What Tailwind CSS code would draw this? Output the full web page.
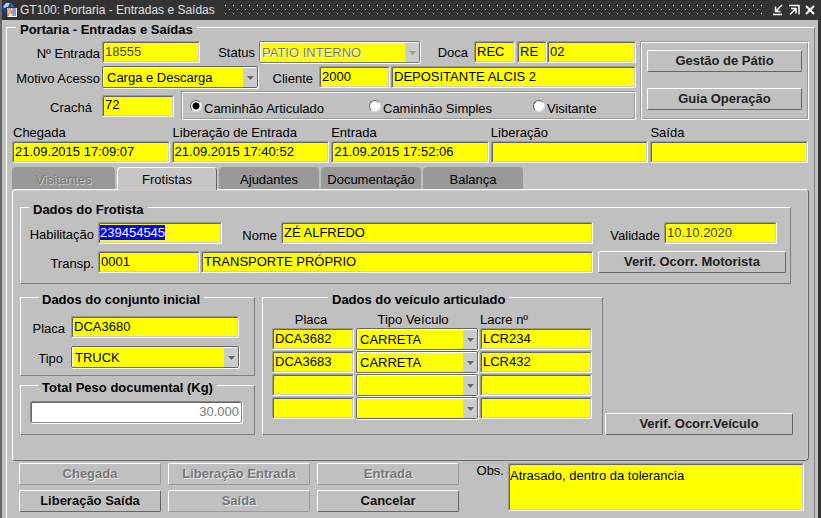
<!DOCTYPE html>
<html lang="pt-BR">
<head>
    <title>GT100: Portaria - Entradas e Saídas</title>
    <meta charset="UTF-8">
    <meta name="viewport" content="width=device-width, initial-scale=1.0">
    <script src="https://cdn.jsdelivr.net/npm/@tailwindcss/browser@4"></script>
</head>
<body class="bg-[#c0c0c0] text-black text-[13px] leading-4 font-['Liberation_Sans',Arial,sans-serif]">
    <div class="flex flex-col h-screen overflow-hidden border-l-2 border-l-[#666] border-r-3 border-r-[#333]">
        <!-- title bar -->
        <header class="flex items-center h-5 shrink-0 bg-[#333] text-[#e0e0e0]">
            <svg class="size-4 mr-0.5" viewBox="0 0 16 16">
                <circle cx="6" cy="6" r="6" fill="#1a3f9c"/>
                <path d="M1 5l3-4 4 0-2 4-3 1z" fill="#a8dcd8"/>
                <path d="M9 1l3 4-3 1z" fill="#3f8e8c"/>
                <rect x="4.500" y="5.500" width="11" height="10" fill="#fff" stroke="#1c2a90" stroke-width="1"/>
                <path d="M10 7h4M10 9h4M9 11h5M10 13h4M5 13h2" stroke="#2536b8" stroke-width="1"/>
                <path d="M6 6h3l-1 3h2l-5 6 1-4H5z" fill="#f7d51d" stroke="#b33" stroke-width=".5"/>
            </svg>
            <h1 class="whitespace-nowrap text-[12px]">GT100: Portaria - Entradas e Saídas</h1>
            <svg class="flex-1 h-3 ml-2.5 mr-2">
                <defs>
                    <pattern id="grip" width="8" height="8" patternUnits="userSpaceOnUse">
                        <path d="M1 2h1v1h-1zM5 6h1v1h-1z" fill="#000"/>
                        <path d="M0 1h1v1h-1zM4 5h1v1h-1z" fill="#ccc"/>
                    </pattern>
                </defs>
                <rect width="100%" height="12" fill="url(#grip)"/>
            </svg>
            <div class="flex gap-1 pr-0.5">
                <button type="button" aria-label="Minimizar">
                    <svg class="size-3" viewBox="0 0 12 12" fill="none" stroke="#fff" stroke-width="1.500"><path d="M10 1L4 7M3.500 2.500v5h5M1 10.500h9"/></svg>
                </button>
                <button type="button" aria-label="Maximizar">
                    <svg class="size-3" viewBox="0 0 12 12" fill="none" stroke="#fff" stroke-width="1.500"><path d="M2 10.500L7 5.500M3 4.500h5v5M1 1.500h10v9" /></svg>
                </button>
                <button type="button" aria-label="Fechar">
                    <svg class="size-3" viewBox="0 0 12 12" fill="none" stroke="#fff" stroke-width="2"><path d="M2 2l8 8M10 2l-8 8"/></svg>
                </button>
            </div>
        </header>

        <fieldset class="flex-1 min-w-0 -mt-1 ml-1 mr-[3px] px-[5px] pt-[3px] border border-t-white border-l-white border-r-[#808080] border-b-0">
            <legend class="ml-1 pt-1.5 px-1 font-bold">Portaria - Entradas e Saídas</legend>

            <div class="flex gap-1">
                <div class="flex-1 min-w-0 flex flex-col gap-[3px]">
                    <div class="flex items-center">
                        <label for="entrada-num" class="w-[90px] pr-0.5 pt-1 text-right">Nº Entrada</label>
                        <input id="entrada-num" value="18555" class="w-[98px] h-[22px] px-0.5 pb-0.5 bg-[#ff0] text-[#444] border border-t-[#999] border-l-[#999] border-r-white border-b-white rounded-xs shadow-[inset_1px_1px_#666,inset_-1px_-1px_#ccc] outline-none">
                        <label for="status" class="w-[59px] pr-1 pt-0.5 text-right">Status</label>
                        <div class="relative flex-1">
                            <select id="status" disabled class="block appearance-none w-full h-[22px] pl-0.5 pt-px bg-[#ff0] text-[#777] text-shadow-[1px_1px_0_#fff] border border-[#777] rounded-xs shadow-[inset_1px_1px_#fff,1px_1px_#fff] opacity-100"><option>PATIO INTERNO</option></select>
                            <span class="pointer-events-none absolute right-px top-0.5 bottom-px w-3.5 flex items-center justify-center bg-[#ccc]"><svg class="w-[7px] h-1" viewBox="0 0 7 4"><path d="M0 0h7L3.500 4z" fill="#999"/></svg></span>
                        </div>
                        <label for="doca" class="w-[54px] pr-1.5 pt-0.5 text-right">Doca</label>
                        <input id="doca" value="REC" class="w-[41px] h-[22px] mr-0.5 px-0.5 pb-0.5 bg-[#ff0] border border-t-[#999] border-l-[#999] border-r-white border-b-white rounded-xs shadow-[inset_1px_1px_#666,inset_-1px_-1px_#ccc] outline-none">
                        <input aria-label="Doca setor" value="RE" class="w-[30px] h-[22px] px-0.5 pb-0.5 bg-[#ff0] border border-t-[#999] border-l-[#999] border-r-white border-b-white rounded-xs shadow-[inset_1px_1px_#666,inset_-1px_-1px_#ccc] outline-none">
                        <input aria-label="Doca número" value="02" class="w-[89px] h-[22px] px-0.5 pb-0.5 bg-[#ff0] border border-t-[#999] border-l-[#999] border-r-white border-b-white rounded-xs shadow-[inset_1px_1px_#666,inset_-1px_-1px_#ccc] outline-none">
                    </div>
                    <div class="flex items-center">
                        <label for="motivo" class="w-[90px] pr-0.5 pt-1 text-right">Motivo Acesso</label>
                        <div class="relative w-[156px]">
                            <select id="motivo" class="block appearance-none w-full h-[22px] pl-1 pt-px bg-[#ff0] border border-[#666] rounded-xs shadow-[inset_1px_1px_#fff,1px_1px_#fff]"><option>Carga e Descarga</option></select>
                            <span class="pointer-events-none absolute right-px top-0.5 bottom-px w-3.5 flex items-center justify-center bg-[#ccc]"><svg class="w-[7px] h-1" viewBox="0 0 7 4"><path d="M0 0h7L3.500 4z" fill="#666"/></svg></span>
                        </div>
                        <label for="cliente" class="w-[61px] pr-1.5 pt-1 text-right">Cliente</label>
                        <input id="cliente" value="2000" class="w-[71px] h-[22px] mr-px px-0.5 pb-0.5 bg-[#ff0] border border-t-[#999] border-l-[#999] border-r-white border-b-white rounded-xs shadow-[inset_1px_1px_#666,inset_-1px_-1px_#ccc] outline-none">
                        <input aria-label="Nome do cliente" value="DEPOSITANTE ALCIS 2" class="flex-1 min-w-0 h-[22px] px-0.5 pb-0.5 bg-[#ff0] border border-t-[#999] border-l-[#999] border-r-white border-b-white rounded-xs shadow-[inset_1px_1px_#666,inset_-1px_-1px_#ccc] outline-none">
                    </div>
                    <div class="flex items-center">
                        <label for="cracha" class="w-[90px] pr-2.5 pt-1 text-right">Crachá</label>
                        <input id="cracha" value="72" class="w-[72px] h-[22px] mr-[7px] px-0.5 pb-0.5 bg-[#ff0] border border-t-[#999] border-l-[#999] border-r-white border-b-white rounded-xs shadow-[inset_1px_1px_#666,inset_-1px_-1px_#ccc] outline-none">
                        <div role="radiogroup" aria-label="Tipo de acesso" class="flex-1 flex items-center h-[29px] pl-2 border border-t-[#999] border-l-[#999] border-r-white border-b-white shadow-[inset_1px_1px_#fff,inset_-1px_-1px_#999]">
                            <label class="flex items-center gap-0.5 w-[179px]">
                                <input type="radio" name="tipo-acesso" checked class="appearance-none size-3 rounded-full bg-white border border-t-[#666] border-l-[#666] border-r-[#ddd] border-b-[#ddd] checked:bg-[radial-gradient(#000_45%,#fff_55%)]">
                                <span class="pt-1.5">Caminhão Articulado</span>
                            </label>
                            <label class="flex items-center gap-0.5 w-[164px]">
                                <input type="radio" name="tipo-acesso" class="appearance-none size-3 rounded-full bg-white border border-t-[#666] border-l-[#666] border-r-[#ddd] border-b-[#ddd] checked:bg-[radial-gradient(#000_45%,#fff_55%)]">
                                <span class="pt-1.5">Caminhão Simples</span>
                            </label>
                            <label class="flex items-center gap-0.5">
                                <input type="radio" name="tipo-acesso" class="appearance-none size-3 rounded-full bg-white border border-t-[#666] border-l-[#666] border-r-[#ddd] border-b-[#ddd] checked:bg-[radial-gradient(#000_45%,#fff_55%)]">
                                <span class="pt-1.5">Visitante</span>
                            </label>
                        </div>
                    </div>
                </div>
                <div class="w-[169px] flex flex-col gap-4 px-1.5 pt-2 border border-t-[#999] border-l-[#999] border-r-white border-b-white shadow-[inset_1px_1px_#fff,inset_-1px_-1px_#999]">
                    <button type="button" class="h-[22px] font-bold text-[#222] border border-t-white border-l-white border-r-[#666] border-b-[#666] rounded-xs">Gestão de Pátio</button>
                    <button type="button" class="h-[22px] font-bold text-[#222] border border-t-white border-l-white border-r-[#666] border-b-[#666] rounded-xs">Guia Operação</button>
                </div>
            </div>

            <!-- timestamps -->
            <div class="grid grid-cols-5 gap-0.5 mt-[5px] mr-px">
                <div>
                    <label for="t-chegada" class="block pl-px">Chegada</label>
                    <input id="t-chegada" value="21.09.2015 17:09:07" class="block w-full h-[22px] px-0.5 pb-0.5 bg-[#ff0] border border-t-[#999] border-l-[#999] border-r-white border-b-white rounded-xs shadow-[inset_1px_1px_#666,inset_-1px_-1px_#ccc] outline-none">
                </div>
                <div>
                    <label for="t-lib-entrada" class="block pl-px">Liberação de Entrada</label>
                    <input id="t-lib-entrada" value="21.09.2015 17:40:52" class="block w-full h-[22px] px-0.5 pb-0.5 bg-[#ff0] border border-t-[#999] border-l-[#999] border-r-white border-b-white rounded-xs shadow-[inset_1px_1px_#666,inset_-1px_-1px_#ccc] outline-none">
                </div>
                <div>
                    <label for="t-entrada" class="block">Entrada</label>
                    <input id="t-entrada" value="21.09.2015 17:52:06" class="block w-full h-[22px] px-0.5 pb-0.5 bg-[#ff0] border border-t-[#999] border-l-[#999] border-r-white border-b-white rounded-xs shadow-[inset_1px_1px_#666,inset_-1px_-1px_#ccc] outline-none">
                </div>
                <div>
                    <label for="t-liberacao" class="block">Liberação</label>
                    <input id="t-liberacao" class="block w-full h-[22px] px-0.5 pb-0.5 bg-[#ff0] border border-t-[#999] border-l-[#999] border-r-white border-b-white rounded-xs shadow-[inset_1px_1px_#666,inset_-1px_-1px_#ccc] outline-none">
                </div>
                <div>
                    <label for="t-saida" class="block">Saída</label>
                    <input id="t-saida" class="block w-full h-[22px] px-0.5 pb-0.5 bg-[#ff0] border border-t-[#999] border-l-[#999] border-r-white border-b-white rounded-xs shadow-[inset_1px_1px_#666,inset_-1px_-1px_#ccc] outline-none">
                </div>
            </div>

            <!-- tabs -->
            <div role="tablist" class="flex gap-0.5 mt-1">
                <button type="button" role="tab" disabled class="w-[103px] h-[22px] pt-1 rounded-t-sm bg-[#999] text-[#777] text-shadow-[1px_1px_0_#ccc]">Visitantes</button>
                <button type="button" role="tab" aria-selected="true" class="w-[100px] h-[23px] -mb-px pt-0.5 rounded-t-sm bg-[#c6c6c6] border border-b-0 border-t-white border-l-white border-r-[#666]">Frotistas</button>
                <button type="button" role="tab" class="w-[100px] h-[22px] pt-1 rounded-t-sm bg-[#999]">Ajudantes</button>
                <button type="button" role="tab" class="w-[100px] h-[22px] pt-1 rounded-t-sm bg-[#999]">Documentação</button>
                <button type="button" role="tab" class="w-[100px] h-[22px] pt-1 rounded-t-sm bg-[#999]">Balança</button>
            </div>
            <div role="tabpanel" class="pt-1.5 pl-[7px] pb-[25px] border border-t-white border-l-white border-r-[#666] border-b-[#666] rounded-sm shadow-[inset_1px_1px_#ccc,inset_-1px_-1px_#ccc]">
                <fieldset class="min-w-0 mr-[17px] pt-1 pb-2.5 pr-1 flex flex-col gap-[7px] border border-t-white border-l-white border-r-[#808080] border-b-[#808080]">
                    <legend class="ml-2 pt-1.5 px-1 font-bold">Dados do Frotista</legend>
                    <div class="flex items-center pr-[9px]">
                        <label for="habilitacao" class="w-[77px] pr-1 pt-1 text-right">Habilitação</label>
                        <input id="habilitacao" value="239454545" class="w-[124px] h-[22px] px-px pb-0.5 leading-[18px] bg-[#ff0] selection:bg-[#00f] selection:text-white border border-t-[#999] border-l-[#999] border-r-white border-b-white rounded-xs shadow-[inset_1px_1px_#666,inset_-1px_-1px_#ccc] outline-none">
                        <label for="nome" class="w-[59px] pr-1 pt-1.5 text-right">Nome</label>
                        <input id="nome" value="ZÉ ALFREDO" class="flex-1 min-w-0 h-[22px] px-0.5 pb-0.5 bg-[#ff0] border border-t-[#999] border-l-[#999] border-r-white border-b-white rounded-xs shadow-[inset_1px_1px_#666,inset_-1px_-1px_#ccc] outline-none">
                        <label for="validade" class="w-[71px] pr-1 pt-1.5 text-right">Validade</label>
                        <input id="validade" value="10.10.2020" class="w-[113px] h-[22px] px-0.5 pb-0.5 bg-[#ff0] text-[#444] border border-t-[#999] border-l-[#999] border-r-white border-b-white rounded-xs shadow-[inset_1px_1px_#666,inset_-1px_-1px_#ccc] outline-none">
                    </div>
                    <div class="flex items-center">
                        <label for="transp" class="w-[77px] pr-1 pt-1 text-right">Transp.</label>
                        <input id="transp" value="0001" class="w-[102px] h-[22px] mr-px px-0.5 pb-0.5 bg-[#ff0] border border-t-[#999] border-l-[#999] border-r-white border-b-white rounded-xs shadow-[inset_1px_1px_#666,inset_-1px_-1px_#ccc] outline-none">
                        <input aria-label="Nome da transportadora" value="TRANSPORTE PRÓPRIO" class="flex-1 min-w-0 h-[22px] px-0.5 pb-0.5 bg-[#ff0] border border-t-[#999] border-l-[#999] border-r-white border-b-white rounded-xs shadow-[inset_1px_1px_#666,inset_-1px_-1px_#ccc] outline-none">
                        <button type="button" class="w-[188px] h-[22px] ml-[5px] font-bold text-[#222] border border-t-white border-l-white border-r-[#666] border-b-[#666] rounded-xs">Verif. Ocorr. Motorista</button>
                    </div>
                </fieldset>

                <div class="flex mt-0.5">
                    <div class="w-[235px] mr-[7px]">
                        <fieldset class="min-w-0 pt-2 pb-[7px] pr-[15px] flex flex-col gap-2 border border-t-white border-l-white border-r-[#808080] border-b-[#808080]">
                            <legend class="ml-[17px] pt-1.5 px-1 font-bold">Dados do conjunto inicial</legend>
                            <div class="flex items-center">
                                <label for="placa" class="w-[50px] pr-1.5 pt-1 text-right">Placa</label>
                                <input id="placa" value="DCA3680" class="flex-1 min-w-0 h-[22px] px-0.5 pb-0.5 bg-[#ff0] border border-t-[#999] border-l-[#999] border-r-white border-b-white rounded-xs shadow-[inset_1px_1px_#666,inset_-1px_-1px_#ccc] outline-none">
                            </div>
                            <div class="flex items-center">
                                <label for="tipo" class="w-[50px] pr-2 pt-1 text-right">Tipo</label>
                                <div class="relative flex-1">
                                    <select id="tipo" class="block appearance-none w-full h-[22px] pl-[3px] pt-0.5 bg-[#ff0] border border-[#666] rounded-xs shadow-[inset_1px_1px_#fff,1px_1px_#fff]"><option>TRUCK</option></select>
                                    <span class="pointer-events-none absolute right-px top-0.5 bottom-px w-3.5 flex items-center justify-center bg-[#ccc]"><svg class="w-[7px] h-1" viewBox="0 0 7 4"><path d="M0 0h7L3.500 4z" fill="#666"/></svg></span>
                                </div>
                            </div>
                        </fieldset>
                        <fieldset class="min-w-0 -mt-0.5 pt-[5px] pb-[11px] pl-[9px] pr-3 border border-t-white border-l-white border-r-[#808080] border-b-[#808080]">
                            <legend class="ml-2 pt-1.5 px-1 font-bold"><label for="peso">Total Peso documental (Kg)</label></legend>
                            <input id="peso" value="30.000" class="block w-full h-[22px] px-0.5 pb-0.5 bg-white text-[#777] text-right border border-[#888] rounded-xs shadow-[inset_1px_1px_#666,1px_1px_#fff] outline-none">
                        </fieldset>
                    </div>

                    <fieldset class="min-w-0 flex-1 pb-3.5 pl-[9px] pr-2.5 border border-t-white border-l-white border-r-[#808080] border-b-[#808080]">
                        <legend class="ml-14 pt-1.5 px-1 font-bold">Dados do veículo articulado</legend>
                        <table class="w-full table-fixed border-collapse">
                            <thead>
                                <tr class="h-5">
                                    <th class="w-[84px] p-0 pt-1 pr-1.5 font-normal">Placa</th>
                                    <th class="p-0 pt-1 pr-2.5 font-normal">Tipo Veículo</th>
                                    <th class="w-[112px] p-0 pt-1 font-normal text-left">Lacre nº</th>
                                </tr>
                            </thead>
                            <tbody>
                                <tr>
                                    <td class="p-0 pr-0.5 pb-px"><input aria-label="Placa 1" value="DCA3682" class="block w-full h-[22px] px-0.5 pb-0.5 bg-[#ff0] border border-t-[#999] border-l-[#999] border-r-white border-b-white rounded-xs shadow-[inset_1px_1px_#666,inset_-1px_-1px_#ccc] outline-none"></td>
                                    <td class="p-0 pr-0.5 pb-px">
                                        <div class="relative">
                                            <select aria-label="Tipo Veículo 1" class="block appearance-none w-full h-[22px] pl-[3px] pt-0.5 bg-[#ff0] border border-[#666] rounded-xs shadow-[inset_1px_1px_#fff,1px_1px_#fff]"><option>CARRETA</option></select>
                                            <span class="pointer-events-none absolute right-px top-0.5 bottom-px w-3.5 flex items-center justify-center bg-[#ccc]"><svg class="w-[7px] h-1" viewBox="0 0 7 4"><path d="M0 0h7L3.500 4z" fill="#666"/></svg></span>
                                        </div>
                                    </td>
                                    <td class="p-0 pb-px"><input aria-label="Lacre 1" value="LCR234" class="block w-full h-[22px] px-0.5 pb-0.5 bg-[#ff0] border border-t-[#999] border-l-[#999] border-r-white border-b-white rounded-xs shadow-[inset_1px_1px_#666,inset_-1px_-1px_#ccc] outline-none"></td>
                                </tr>
                                <tr>
                                    <td class="p-0 pr-0.5 pb-px"><input aria-label="Placa 2" value="DCA3683" class="block w-full h-[22px] px-0.5 pb-0.5 bg-[#ff0] border border-t-[#999] border-l-[#999] border-r-white border-b-white rounded-xs shadow-[inset_1px_1px_#666,inset_-1px_-1px_#ccc] outline-none"></td>
                                    <td class="p-0 pr-0.5 pb-px">
                                        <div class="relative">
                                            <select aria-label="Tipo Veículo 2" class="block appearance-none w-full h-[22px] pl-[3px] pt-0.5 bg-[#ff0] border border-[#666] rounded-xs shadow-[inset_1px_1px_#fff,1px_1px_#fff]"><option>CARRETA</option></select>
                                            <span class="pointer-events-none absolute right-px top-0.5 bottom-px w-3.5 flex items-center justify-center bg-[#ccc]"><svg class="w-[7px] h-1" viewBox="0 0 7 4"><path d="M0 0h7L3.500 4z" fill="#666"/></svg></span>
                                        </div>
                                    </td>
                                    <td class="p-0 pb-px"><input aria-label="Lacre 2" value="LCR432" class="block w-full h-[22px] px-0.5 pb-0.5 bg-[#ff0] border border-t-[#999] border-l-[#999] border-r-white border-b-white rounded-xs shadow-[inset_1px_1px_#666,inset_-1px_-1px_#ccc] outline-none"></td>
                                </tr>
                                <tr>
                                    <td class="p-0 pr-0.5 pb-px"><input aria-label="Placa 3" class="block w-full h-[22px] px-0.5 pb-0.5 bg-[#ff0] border border-t-[#999] border-l-[#999] border-r-white border-b-white rounded-xs shadow-[inset_1px_1px_#666,inset_-1px_-1px_#ccc] outline-none"></td>
                                    <td class="p-0 pr-0.5 pb-px">
                                        <div class="relative">
                                            <select aria-label="Tipo Veículo 3" class="block appearance-none w-full h-[22px] pl-[3px] pt-0.5 bg-[#ff0] border border-[#666] rounded-xs shadow-[inset_1px_1px_#fff,1px_1px_#fff]"><option></option></select>
                                            <span class="pointer-events-none absolute right-px top-0.5 bottom-px w-3.5 flex items-center justify-center bg-[#ccc]"><svg class="w-[7px] h-1" viewBox="0 0 7 4"><path d="M0 0h7L3.500 4z" fill="#666"/></svg></span>
                                        </div>
                                    </td>
                                    <td class="p-0 pb-px"><input aria-label="Lacre 3" class="block w-full h-[22px] px-0.5 pb-0.5 bg-[#ff0] border border-t-[#999] border-l-[#999] border-r-white border-b-white rounded-xs shadow-[inset_1px_1px_#666,inset_-1px_-1px_#ccc] outline-none"></td>
                                </tr>
                                <tr>
                                    <td class="p-0 pr-0.5 pb-px"><input aria-label="Placa 4" class="block w-full h-[22px] px-0.5 pb-0.5 bg-[#ff0] border border-t-[#999] border-l-[#999] border-r-white border-b-white rounded-xs shadow-[inset_1px_1px_#666,inset_-1px_-1px_#ccc] outline-none"></td>
                                    <td class="p-0 pr-0.5 pb-px">
                                        <div class="relative">
                                            <select aria-label="Tipo Veículo 4" class="block appearance-none w-full h-[22px] pl-[3px] pt-0.5 bg-[#ff0] border border-[#666] rounded-xs shadow-[inset_1px_1px_#fff,1px_1px_#fff]"><option></option></select>
                                            <span class="pointer-events-none absolute right-px top-0.5 bottom-px w-3.5 flex items-center justify-center bg-[#ccc]"><svg class="w-[7px] h-1" viewBox="0 0 7 4"><path d="M0 0h7L3.500 4z" fill="#666"/></svg></span>
                                        </div>
                                    </td>
                                    <td class="p-0 pb-px"><input aria-label="Lacre 4" class="block w-full h-[22px] px-0.5 pb-0.5 bg-[#ff0] border border-t-[#999] border-l-[#999] border-r-white border-b-white rounded-xs shadow-[inset_1px_1px_#666,inset_-1px_-1px_#ccc] outline-none"></td>
                                </tr>
                            </tbody>
                        </table>
                    </fieldset>
                    <button type="button" class="self-end w-[188px] h-[22px] ml-0.5 mr-[15px] font-bold text-[#222] border border-t-white border-l-white border-r-[#666] border-b-[#666] rounded-xs">Verif. Ocorr.Veículo</button>
                </div>
            </div>

            <!-- actions -->
            <div class="flex mt-0.5 pl-[7px] pr-[5px]">
                <div class="grid grid-cols-3 gap-x-[7px] gap-y-[5px] w-[440px]">
                    <button type="button" disabled class="h-[22px] font-bold text-[#777] text-shadow-[1px_1px_0_#eee] border border-t-white border-l-white border-r-[#999] border-b-[#999] rounded-xs">Chegada</button>
                    <button type="button" disabled class="h-[22px] font-bold text-[#777] text-shadow-[1px_1px_0_#eee] border border-t-white border-l-white border-r-[#999] border-b-[#999] rounded-xs">Liberação Entrada</button>
                    <button type="button" disabled class="h-[22px] font-bold text-[#777] text-shadow-[1px_1px_0_#eee] border border-t-white border-l-white border-r-[#999] border-b-[#999] rounded-xs">Entrada</button>
                    <button type="button" class="h-[22px] font-bold text-[#111] border border-t-white border-l-white border-r-[#666] border-b-[#666] rounded-xs">Liberação Saída</button>
                    <button type="button" disabled class="h-[22px] font-bold text-[#777] text-shadow-[1px_1px_0_#eee] border border-t-white border-l-white border-r-[#999] border-b-[#999] rounded-xs">Saída</button>
                    <button type="button" class="h-[22px] font-bold text-[#111] border border-t-white border-l-white border-r-[#666] border-b-[#666] rounded-xs">Cancelar</button>
                </div>
                <label for="obs" class="w-[49px] pr-1 text-right">Obs.</label>
                <textarea id="obs" class="flex-1 min-w-0 h-12 px-px pt-1 resize-none overflow-hidden bg-[#ff0] border border-t-[#999] border-l-[#999] border-r-white border-b-white rounded-xs shadow-[inset_1px_1px_#666,inset_-1px_-1px_#ccc] outline-none">Atrasado, dentro da tolerancia</textarea>
            </div>
        </fieldset>
    </div>
    <script>
        // start on the licence number, ready to be typed over
        const habilitacao = document.getElementById('habilitacao');
        habilitacao.focus();
        habilitacao.select();
    </script>
</body>
</html>
